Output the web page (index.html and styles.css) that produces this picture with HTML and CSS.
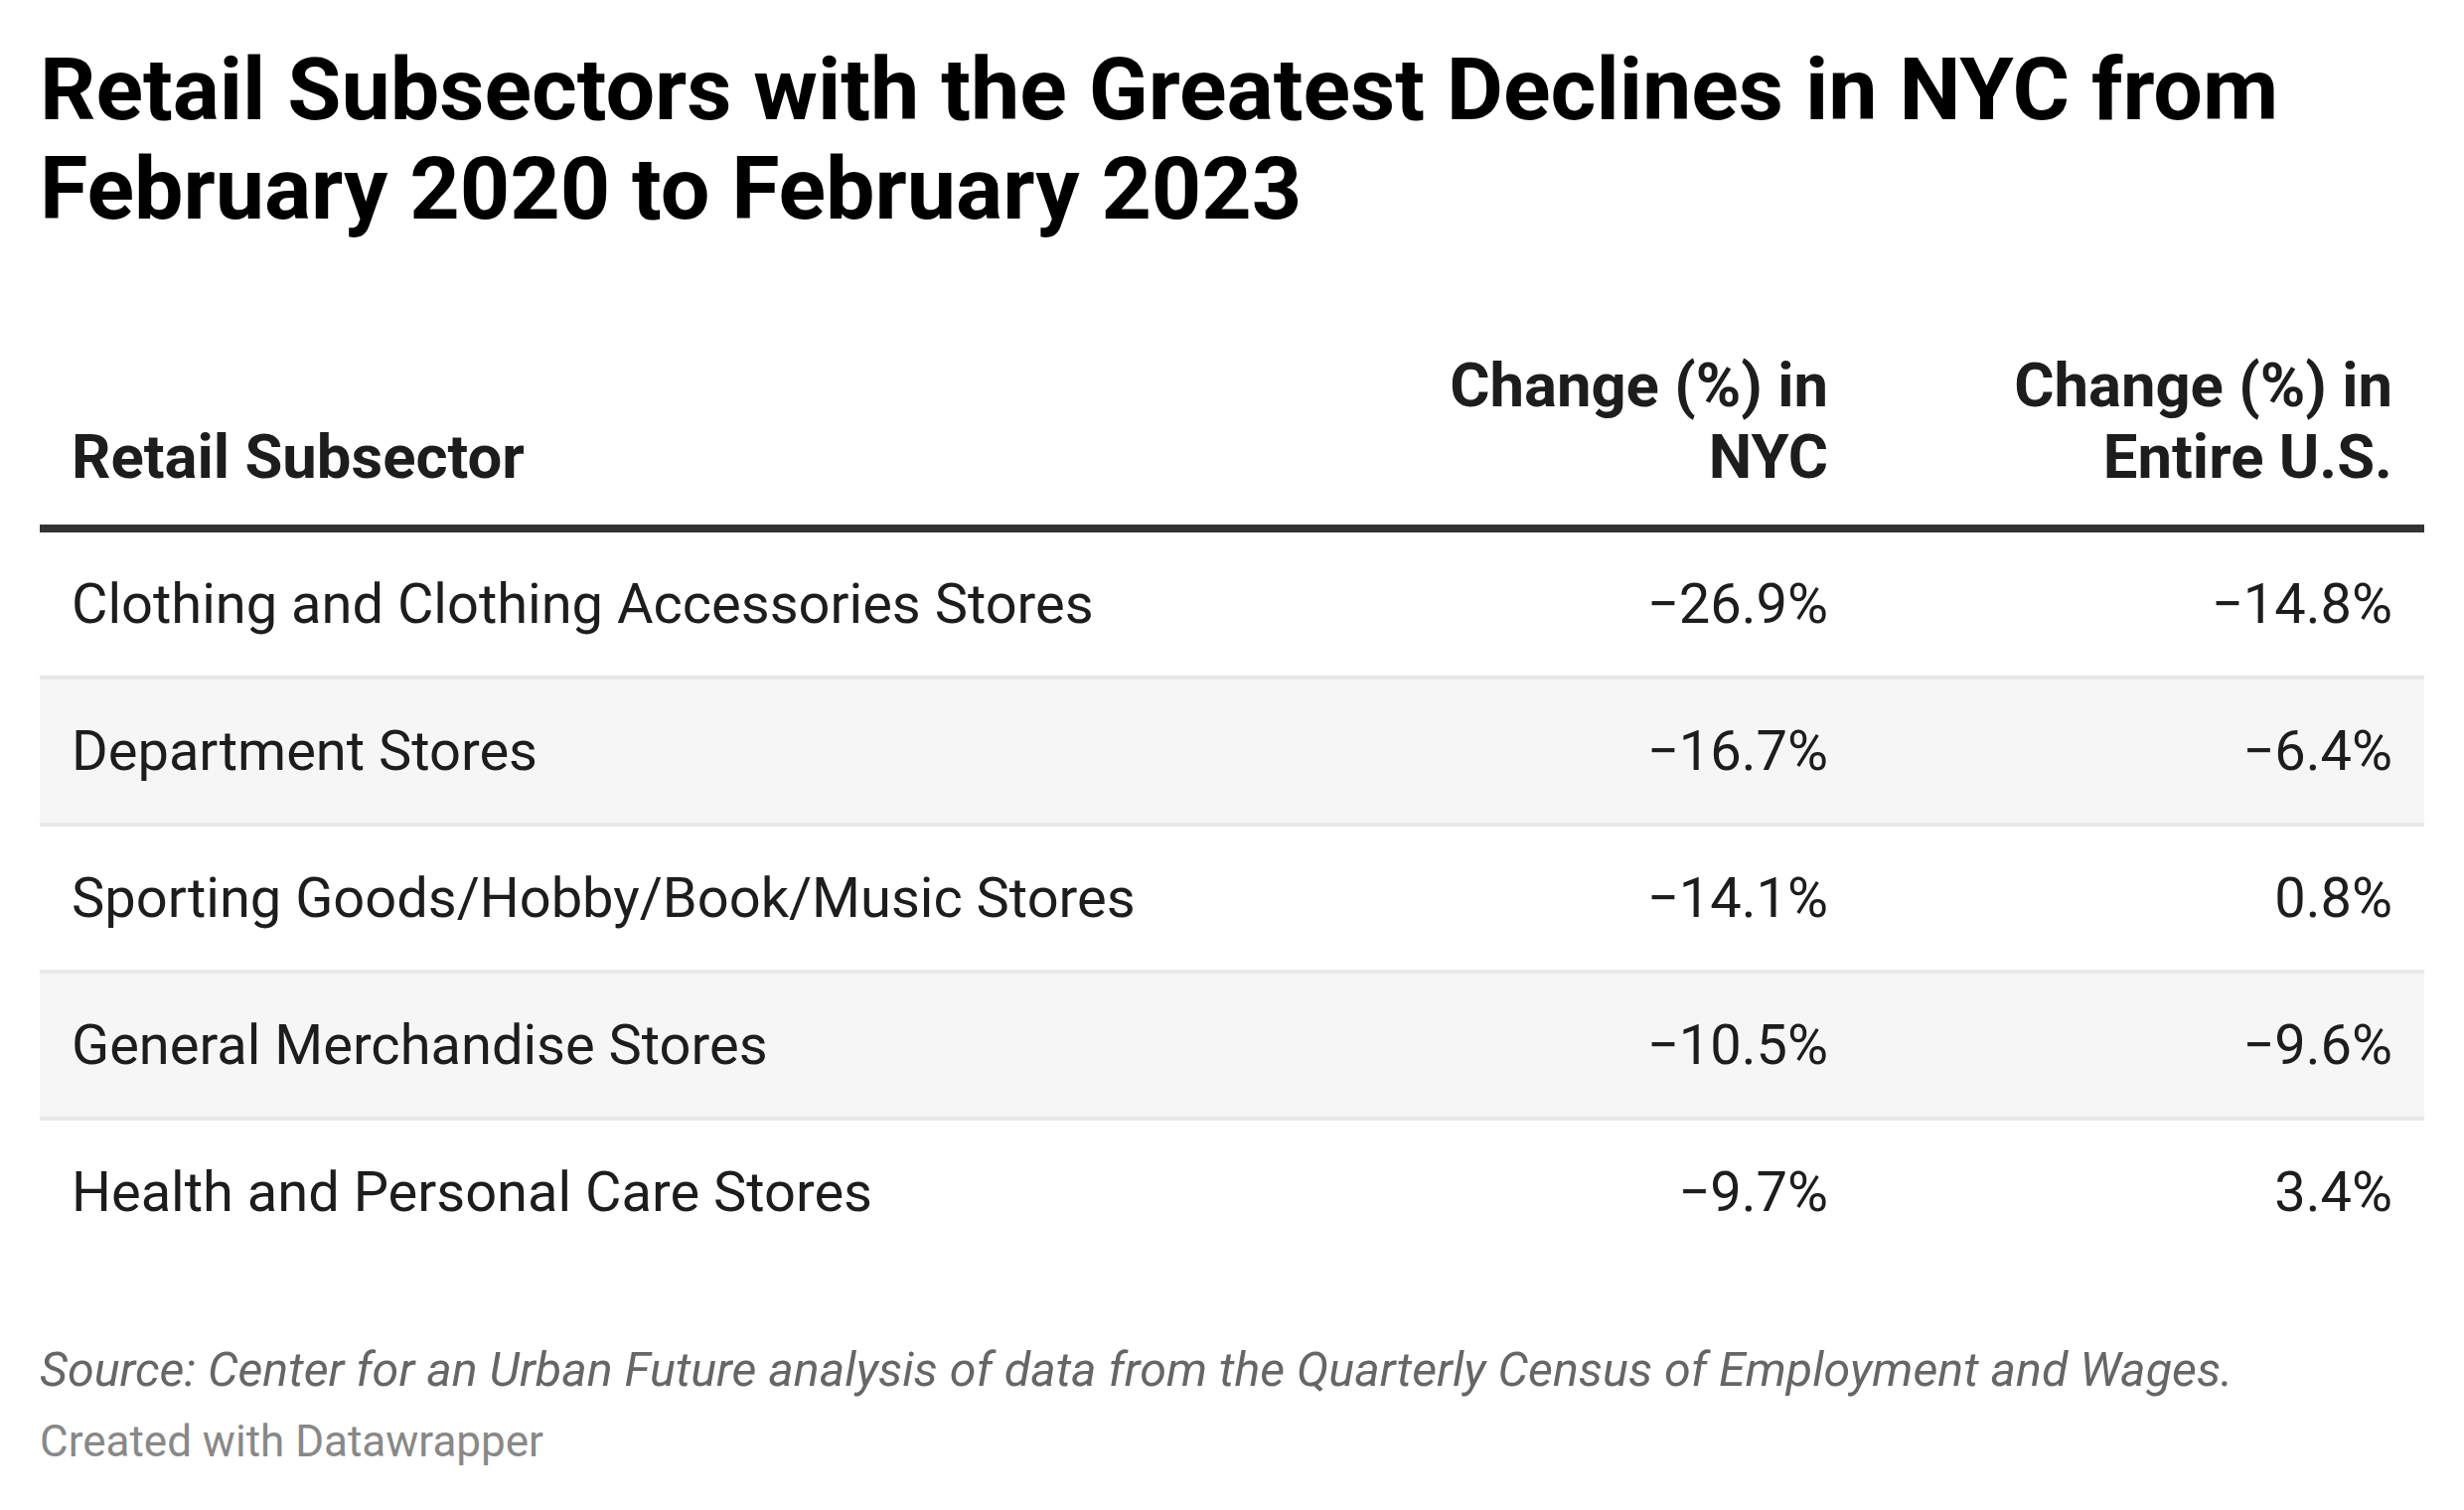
FILE: index.html
```html
<!DOCTYPE html>
<html lang="en">
<head>
<meta charset="utf-8">
<title>Retail Subsectors with the Greatest Declines in NYC</title>
<link rel="stylesheet" href="styles.css">
</head>
<body>
<div class="chart">
  <h1 class="title">Retail Subsectors with the Greatest Declines in NYC from<br>February 2020 to February 2023</h1>
  <table class="data">
    <colgroup>
      <col class="c-name">
      <col class="c-nyc">
      <col class="c-us">
    </colgroup>
    <thead>
      <tr>
        <th class="left">Retail Subsector</th>
        <th class="num">Change (%) in NYC</th>
        <th class="num">Change (%) in Entire U.S.</th>
      </tr>
    </thead>
    <tbody>
      <tr>
        <td class="left">Clothing and Clothing Accessories Stores</td>
        <td class="num">−26.9%</td>
        <td class="num">−14.8%</td>
      </tr>
      <tr class="alt">
        <td class="left">Department Stores</td>
        <td class="num">−16.7%</td>
        <td class="num">−6.4%</td>
      </tr>
      <tr>
        <td class="left">Sporting Goods/Hobby/Book/Music Stores</td>
        <td class="num">−14.1%</td>
        <td class="num">0.8%</td>
      </tr>
      <tr class="alt">
        <td class="left">General Merchandise Stores</td>
        <td class="num">−10.5%</td>
        <td class="num">−9.6%</td>
      </tr>
      <tr>
        <td class="left">Health and Personal Care Stores</td>
        <td class="num">−9.7%</td>
        <td class="num">3.4%</td>
      </tr>
    </tbody>
  </table>
  <div class="notes">
    <p class="source">Source: Center for an Urban Future analysis of data from the Quarterly Census of Employment and Wages.</p>
    <p class="credit">Created with Datawrapper</p>
  </div>
</div>
</body>
</html>
```

FILE: styles.css
```css
html, body {
  margin: 0;
  padding: 0;
  background: #ffffff;
}

body {
  font-family: Roboto, "Liberation Sans", Arial, sans-serif;
  color: #1d1d1d;
}

.chart {
  padding: 40px;
  width: 2400px;
}

.title {
  margin: 0 0 80px 0;
  font-size: 88px;
  line-height: 100px;
  font-weight: 700;
  color: #000000;
}

.data {
  width: 2400px;
  border-collapse: collapse;
  table-layout: fixed;
}

.c-name { width: 1372px; }
.c-nyc { width: 460px; }
.c-us { width: 568px; }

.data th {
  font-size: 61.6px;
  line-height: 72px;
  font-weight: 700;
  padding: 32px 32px;
  vertical-align: bottom;
  border-bottom: 8px solid #333333;
  color: #1d1d1d;
}

.data td {
  font-size: 56px;
  line-height: 80px;
  font-weight: 400;
  padding: 32px 32px;
  border-bottom: 4px solid #e8e8e8;
}

.data tbody tr:last-child td {
  border-bottom: none;
}

.data tr.alt td {
  background: #f6f6f6;
}

.left { text-align: left; }
.num { text-align: right; }

.notes {
  margin-top: 77px;
}

.source {
  margin: 0;
  font-size: 48.4px;
  line-height: 60px;
  font-style: italic;
  color: #666666;
}

.credit {
  margin: 14px 0 0 0;
  font-size: 44px;
  line-height: 56px;
  color: #888888;
}
```
